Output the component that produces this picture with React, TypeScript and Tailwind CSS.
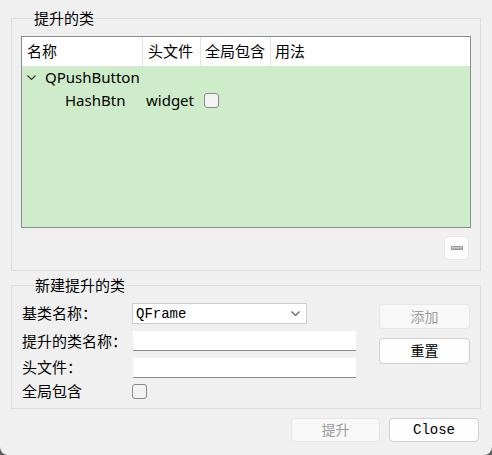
import React from "react";

/**
 * Qt Designer 「提升的窗口部件」 dialog — promoted classes list + new class form.
 */

const UI_FONT = "font-['Noto_Sans','Noto_Sans_CJK_SC',sans-serif]";
const MONO_FONT = "font-['Liberation_Mono','Noto_Sans_CJK_SC',monospace]";

function Chevron({ className }: { className?: string }): JSX.Element {
  return (
    <svg width="9" height="5" viewBox="0 0 9 5" className={className} fill="none">
      <path d="M0.5 0.5 L4.5 4.5 L8.5 0.5" stroke="currentColor" strokeWidth="1.1" />
    </svg>
  );
}

function CheckBox(): JSX.Element {
  return (
    <span className="block h-[15px] w-[15px] rounded-[3px] border border-[#8a8a8a] bg-[#f3f3f3]" />
  );
}

function DlgButton({
  children,
  disabled,
  mono,
  className = "",
}: {
  children: React.ReactNode;
  disabled?: boolean;
  mono?: boolean;
  className?: string;
}): JSX.Element {
  return (
    <button
      type="button"
      disabled={disabled}
      className={`flex items-center justify-center rounded-[4px] border text-[14px] leading-none ${
        mono ? MONO_FONT : UI_FONT
      } ${
        disabled
          ? "border-[#e6e6e6] bg-[#f8f8f8] text-[#9d9d9d]"
          : "border-[#d0d0d0] bg-[#fdfdfd] text-black"
      } ${className}`}
    >
      {children}
    </button>
  );
}

function TextInput(): JSX.Element {
  return (
    <div className="ml-[1px] h-[20px] w-[223px] border-b border-[#8a8a8a] bg-white" />
  );
}

export default function App(): JSX.Element {
  return (
    <div className="h-[455px] w-[492px] bg-[#5e5e5e]">
      <div
        className={`flex h-full w-full flex-col rounded-b-[8px] bg-[#f0f0f0] px-[11px] pt-[9px] text-[15px] text-black ${UI_FONT}`}
      >
        {/* 提升的类 */}
        <fieldset className="border border-[#dcdcdc] px-[9px] pb-[10px] pt-[9px]">
          <legend className="ml-[12px] px-[1px] leading-[18px]">提升的类</legend>

          <div className="h-[192px] w-[450px] border border-[#888d94] bg-[#ceecc9]">
            {/* header */}
            <div className="flex h-[29px] items-center bg-white leading-none">
              <div className="flex h-full w-[121px] items-center border-r border-[#e3e3e3] pl-[5px]">名称</div>
              <div className="flex h-full w-[58px] items-center border-r border-[#e3e3e3] pl-[5px]">头文件</div>
              <div className="flex h-full w-[70px] items-center border-r border-[#e3e3e3] pl-[4px]">全局包含</div>
              <div className="flex h-full flex-1 items-center pl-[4px]">用法</div>
            </div>

            {/* rows */}
            <div className="flex h-[23px] items-center">
              <div className="flex w-[121px] items-center pl-[5px]">
                <Chevron className="text-[#333]" />
                <span className="ml-[9px]">QPushButton</span>
              </div>
            </div>
            <div className="flex h-[23px] items-center">
              <div className="w-[121px] pl-[43px]">HashBtn</div>
              <div className="w-[58px] pl-[3px]">widget</div>
              <div className="w-[70px] pl-[3px]">
                <CheckBox />
              </div>
            </div>
          </div>

          <div className="mt-[8px] flex justify-end pr-[2px]">
            <button
              type="button"
              className="flex h-[24px] w-[25px] items-center justify-center rounded-[4px] border border-[#e8e8e8] bg-[#fbfbfb]"
            >
              <span className="block h-[4px] w-[12px] border border-[#9c9c9c] bg-gradient-to-b from-[#d6d6d6] to-[#a8a8a8]" />
            </button>
          </div>
        </fieldset>

        {/* 新建提升的类 */}
        <fieldset className="mt-[5px] border border-[#dcdcdc] pb-[9px] pl-[10px] pr-[10px] pt-[9px]">
          <legend className="ml-[12px] px-[1px] leading-[18px]">新建提升的类</legend>

          <div className="flex">
            <div className="flex flex-col">
              <div className="flex h-[21px] items-center">
                <span className="w-[110px]">基类名称：</span>
                <div className="flex h-[21px] w-[175px] items-center justify-between border border-[#cdcdcd] bg-white pl-[3px] pr-[6px]">
                  <span className={`${MONO_FONT} text-[14px] leading-none`}>QFrame</span>
                  <Chevron className="text-[#5a5a5a]" />
                </div>
              </div>
              <div className="mt-[7px] flex h-[20px] items-center">
                <span className="w-[110px]">提升的类名称：</span>
                <TextInput />
              </div>
              <div className="mt-[6px] flex h-[21px] items-center">
                <span className="w-[110px]">头文件：</span>
                <TextInput />
              </div>
              <div className="mt-[6px] flex h-[15px] items-center">
                <span className="w-[110px]">全局包含</span>
                <CheckBox />
              </div>
            </div>

            <div className="ml-[23px] flex flex-col pt-[1px]">
              <DlgButton disabled className="h-[25px] w-[91px]">
                添加
              </DlgButton>
              <DlgButton className="mt-[9px] h-[26px] w-[91px]">重置</DlgButton>
            </div>
          </div>
        </fieldset>

        {/* dialog buttons */}
        <div className="mt-[9px] flex justify-end gap-[9px] pr-[2px]">
          <DlgButton disabled className="h-[24px] w-[89px]">
            提升
          </DlgButton>
          <DlgButton mono className="h-[24px] w-[90px]">
            Close
          </DlgButton>
        </div>
      </div>
    </div>
  );
}
